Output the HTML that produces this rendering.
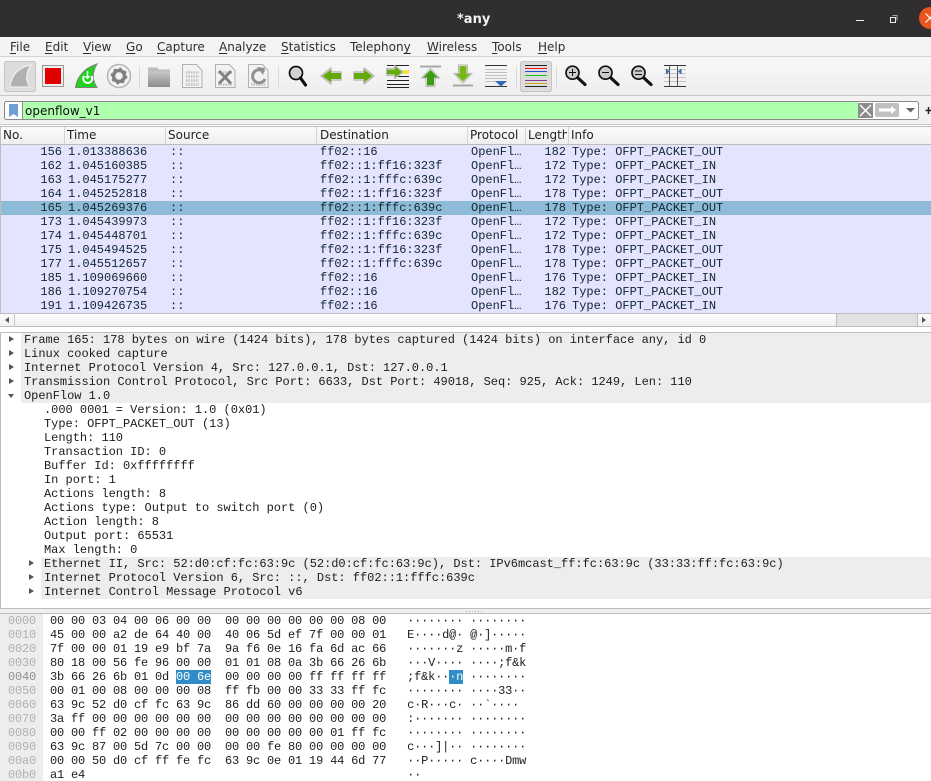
<!DOCTYPE html>
<html><head><meta charset="utf-8"><style>
html,body{margin:0;padding:0;background:#fff}
#r{position:relative;width:931px;height:781px;overflow:hidden;background:#fff;font-family:"DejaVu Sans",sans-serif;font-size:12px;color:#222}
.b{position:absolute}
.m{position:absolute;top:40px;font:12px/14px "DejaVu Sans",sans-serif;color:#2e2e2e;white-space:pre}
.m u{text-underline-offset:2px}
.h{position:absolute;top:127px;font:12px/16px "DejaVu Sans",sans-serif;color:#222;white-space:pre;overflow:hidden}
.s{position:absolute;top:127px;width:1px;height:17px;background:#d4d4d4}
.row{position:absolute;left:1px;width:930px;height:14px;background:#e4e4ff}
.row span{font:12px/14px "Liberation Mono",monospace;color:#12272e;white-space:pre;position:absolute;top:0}
.row .n{left:0;width:61px;text-align:right}
.row .t{left:67px}.row .c{left:169px}.row .d{left:319px}.row .p{left:470px}
.row .l{left:510px;width:55px;text-align:right}.row .i{left:571px}
.det{position:absolute;height:14px;right:0;font:12px/14px "Liberation Mono",monospace;letter-spacing:-0.02px;color:#1c1c1c;white-space:pre;padding-left:3px}
.g{background:#ededed}
.ar{position:absolute;width:0;height:0;border-left:5px solid #555;border-top:3.5px solid transparent;border-bottom:3.5px solid transparent}
.hx{position:absolute;left:8px;height:14px;font:12px/14px "Liberation Mono",monospace;letter-spacing:-0.2px;color:#1c1c1c;white-space:pre}
.hx i{font-style:normal;color:#b0b0b0}
.hx b{font-weight:normal;color:#fff;background:#308cc6}
.hx em{font-style:normal;color:#8f8f8f}
svg{position:absolute;left:0;top:0}
</style></head><body><div id="r">

<div class="b" style="left:0;top:0;width:931px;height:37px;background:#302e2e"></div>
<div class="b" style="left:457px;top:11px;color:#f2f2f2;font:bold 13px/18px 'DejaVu Sans',sans-serif">*any</div>

<div class="b" style="left:0;top:37px;width:931px;height:19px;background:#f3f3f3;border-bottom:1px solid #d4d4d4"></div>
<div class="m" style="left:10px"><u>F</u>ile</div>
<div class="m" style="left:45px"><u>E</u>dit</div>
<div class="m" style="left:83px"><u>V</u>iew</div>
<div class="m" style="left:126px"><u>G</u>o</div>
<div class="m" style="left:157px"><u>C</u>apture</div>
<div class="m" style="left:219px"><u>A</u>nalyze</div>
<div class="m" style="left:281px"><u>S</u>tatistics</div>
<div class="m" style="left:350px">Telephon<u>y</u></div>
<div class="m" style="left:427px"><u>W</u>ireless</div>
<div class="m" style="left:492px"><u>T</u>ools</div>
<div class="m" style="left:538px"><u>H</u>elp</div>

<div class="b" style="left:0;top:57px;width:931px;height:38px;background:linear-gradient(#f8f8f8,#eeeeee);border-bottom:1px solid #c6c6c6"></div>
<div class="b" style="left:0;top:96px;width:931px;height:28px;background:#f2f2f2;border-bottom:1px solid #c9c9c9"></div>

<svg width="931" height="125" viewBox="0 0 931 125">
 <defs>
  <linearGradient id="fg" x1="0" y1="0" x2="0" y2="1"><stop offset="0" stop-color="#c8c8c8"/><stop offset="1" stop-color="#8c8c8c"/></linearGradient>
 </defs>
 <g fill="none">
  <path d="M856 20.500h8" stroke="#eee"/>
  <rect x="890.500" y="17.500" width="5" height="5" stroke="#eee"/>
  <path d="M892.500 15.500h4.500v5" stroke="#aaa"/>
  <circle cx="930" cy="18" r="11" fill="#e9541f"/>
  <path d="M925.500 13.500l9 9M934.500 13.500l-9 9" stroke="#fff" stroke-width="1.200"/>
 </g>
 <rect x="4.500" y="61.500" width="31" height="30" rx="2" fill="#dcdcdc" stroke="#c4c4c4"/>
 <path d="M10 87C11 75 19 67 31 65C26 72 25 80 30 87Z" fill="#b0b0b0" stroke="#f0f0f0" stroke-width="1.200"/>
 <rect x="42.500" y="65.500" width="21" height="21" fill="#eee" stroke="#9a9a9a"/>
 <rect x="45" y="68" width="16" height="16" fill="#e00000"/>
 <path d="M75.500 87.500C77 76 85 68 97 64C92 72 92 80 97 87.500Z" fill="#1cd41c" stroke="#808080"/>
 <path d="M84 76A4.500 4.500 0 1 0 91.500 76" fill="none" stroke="#fff" stroke-width="2"/>
 <path d="M87.500 71v7" stroke="#fff" stroke-width="1.500"/>
 <path d="M84.500 76l3 3.500l3-3.500Z" fill="#fff"/>
 <circle cx="119" cy="76" r="11.500" fill="#f2f2f2" stroke="#b4b4b4" stroke-width="1.500"/>
 <circle cx="119" cy="76" r="5.500" fill="none" stroke="#808080" stroke-width="3.500"/>
 <circle cx="119" cy="76" r="7.500" fill="none" stroke="#808080" stroke-width="1.800" stroke-dasharray="2.500 3.390"/>
 <path d="M139.500 67v20M278.500 67v20M516.500 67v20M556.500 67v20" stroke="#d8d8d8"/>
 <path d="M148 87V67.500h9l2 2h11V87Z" fill="#bdbdbd"/>
 <rect x="148" y="71.500" width="22" height="15.500" fill="url(#fg)"/>
 <g fill="#f2f2f2" stroke="#b0b0b0">
  <path d="M182.500 87.500V64.500h14l5.500 6v17Z"/>
  <path d="M215.500 87.500V64.500h14l5.500 6v17Z"/>
  <path d="M248.500 87.500V64.500h14l5.500 6v17Z"/>
 </g>
 <g stroke="#c0c0c0" stroke-dasharray="1.500 1" stroke-width="2.500" fill="none">
  <path d="M186 72.500h13M186 76.500h13M186 80.500h13M186 84.500h13"/>
  <path d="M218 72.500h14M218 84.500h14"/>
  <path d="M251 84.500h14"/>
 </g>
 <path d="M219 71l12 12.500M231 71l-12 12.500" stroke="#808080" stroke-width="2.800"/>
 <path d="M264 72A6.500 6.500 0 1 0 265 79" fill="none" stroke="#909090" stroke-width="3"/>
 <path d="M257 67l8 1l-2 7Z" fill="#909090"/>
 <circle cx="296" cy="73" r="6.500" fill="#d2d2d2" stroke="#111" stroke-width="1.700"/>
 <path d="M300.500 78l5 7" stroke="#111" stroke-width="3.200" stroke-linecap="round"/>
 <g stroke-linejoin="round">
  <path d="M321 76l10-8v4h10v8h-10v4Z" fill="#fff" stroke="#bcbcbc" stroke-width="1.500"/>
  <path d="M322.500 76l8.500-6.500v3.500h10v6h-10v3.500Z" fill="#64aa0a"/>
  <path d="M374 76l-10-8v4h-10v8h10v4Z" fill="#fff" stroke="#bcbcbc" stroke-width="1.500"/>
  <path d="M372.500 76l-8.500-6.500v3.500h-10v6h10v3.500Z" fill="#64aa0a"/>
 </g>
 <path d="M387 65.500h22M395 76.500h14M387 80.500h22M387 84.500h22M387 87.500h22" stroke="#222"/>
 <rect x="402" y="70" width="7" height="4" fill="#f5e24a"/>
 <path d="M403 72l-8.500-6.500v3h-8v7h8v3Z" fill="#fff" stroke="#bcbcbc" stroke-width="1.200" stroke-linejoin="round"/>
 <path d="M402 72l-7-5.500v3h-8v5h8v3Z" fill="#64aa0a"/>
 <path d="M420 66.500h21" stroke="#a8a8a8" stroke-width="2"/>
 <path d="M430.500 68.500l9 9.500h-4.500v8.500h-9V78h-4.500Z" fill="#fff" stroke="#bcbcbc" stroke-width="1.200" stroke-linejoin="round"/>
 <path d="M430.500 70l7.500 7.500h-4v8h-7v-8h-4Z" fill="#3f9c10"/>
 <path d="M453 85.500h20" stroke="#a8a8a8" stroke-width="2"/>
 <path d="M463 83l9-9.500h-4.500V65h-9v8.500H454Z" fill="#fff" stroke="#bcbcbc" stroke-width="1.200" stroke-linejoin="round"/>
 <path d="M463 81.500l7.500-7.500h-4v-8h-7v8h-4Z" fill="#76b81c"/>
 <path d="M485 65.500h22M485 86.500h22" stroke="#333"/>
 <path d="M485 69.500h22M485 72.500h22M485 75.500h22M485 78.500h22M485 81.500h22" stroke="#c0c0c0"/>
 <path d="M495 81h12l-6 5.500Z" fill="#2f6cb5"/>
 <rect x="520.500" y="61.500" width="31" height="30" rx="2" fill="#dcdcdc" stroke="#c4c4c4"/>
 <path d="M525 65.500h22M525 86.500h22" stroke="#222"/>
 <path d="M525 68.500h22" stroke="#f01818"/><path d="M525 71.500h22" stroke="#2850d8"/>
 <path d="M525 75.500h22" stroke="#20c020"/><path d="M525 80.500h22" stroke="#803c98"/>
 <path d="M525 83.500h22" stroke="#d0a818"/>
 <g fill="#cccccc" stroke="#111" stroke-width="1.700">
  <circle cx="572.500" cy="72.700" r="6.500"/><circle cx="605.500" cy="72.700" r="6.500"/><circle cx="638.500" cy="72.700" r="6.500"/>
 </g>
 <path d="M578 78l7 6.500M611 78l7 6.500M644 78l7 6.500" stroke="#111" stroke-width="3.200" stroke-linecap="round"/>
 <path d="M569 72.500h7M572.500 69v7M602 72.500h7M635 71h7M635 74.500h7" stroke="#111"/>
 <path d="M664 65.500h22M664 86.500h22" stroke="#333"/>
 <path d="M664 69.500h22M664 73.500h22M664 77.500h22M664 81.500h22" stroke="#c4c4c4"/>
 <path d="M669.500 65v22M677.500 65v22" stroke="#555"/>
 <path d="M666 68.500l3.500 3l-3.500 3ZM681.500 68.500l-3.500 3l3.500 3Z" fill="#2f6cb5"/>

 <rect x="4.500" y="101.500" width="914" height="18" rx="2" fill="#fff" stroke="#8a8a8a"/>
 <rect x="23" y="102" width="835" height="17" fill="#afffaf"/>
 <path d="M22.500 102v17" stroke="#8a8a8a"/>
 <path d="M9 104h9v13l-4.500-3l-4.500 3Z" fill="#6d9fd6"/>
 <rect x="858" y="103" width="15" height="15" fill="#8b8b8b"/>
 <path d="M860 105l11 11M871 105l-11 11" stroke="#fff" stroke-width="1.500"/>
 <rect x="875" y="103" width="24" height="14" rx="2" fill="#c0c0c0"/>
 <path d="M879 108.500h12v-2.500l5 4l-5 4v-2.500h-12Z" fill="#fff"/>
 <path d="M906 108h9l-4.500 4.500Z" fill="#666"/>
 <path d="M925.500 110.500h6M928.500 107v7" stroke="#222" stroke-width="1.500"/>
</svg>
<div class="b" style="left:25px;top:103px;font:12px/17px 'DejaVu Sans',sans-serif;color:#111">openflow_v1</div>

<div class="b" style="left:0;top:126px;width:931px;height:1px;background:#bdbdbd"></div>
<div class="b" style="left:0;top:127px;width:931px;height:17px;background:linear-gradient(#fbfbfb,#efefef);border-bottom:1px solid #bcbcbc"></div>
<div class="s" style="left:64px"></div><div class="s" style="left:165px"></div><div class="s" style="left:316px"></div><div class="s" style="left:467px"></div><div class="s" style="left:525px"></div><div class="s" style="left:568px"></div>
<div class="h" style="left:3px">No.</div><div class="h" style="left:67px">Time</div><div class="h" style="left:168px">Source</div><div class="h" style="left:320px">Destination</div><div class="h" style="left:470px">Protocol</div><div class="h" style="left:528px;width:39px">Length</div><div class="h" style="left:571px">Info</div>

<div class="b" style="left:0;top:127px;width:1px;height:200px;background:#bdbdbd"></div>
<div class="row" style="top:145px"><span class="n">156</span><span class="t">1.013388636</span><span class="c">::</span><span class="d">ff02::16</span><span class="p">OpenFl…</span><span class="l">182</span><span class="i">Type: OFPT_PACKET_OUT</span></div>
<div class="row" style="top:159px"><span class="n">162</span><span class="t">1.045160385</span><span class="c">::</span><span class="d">ff02::1:ff16:323f</span><span class="p">OpenFl…</span><span class="l">172</span><span class="i">Type: OFPT_PACKET_IN</span></div>
<div class="row" style="top:173px"><span class="n">163</span><span class="t">1.045175277</span><span class="c">::</span><span class="d">ff02::1:fffc:639c</span><span class="p">OpenFl…</span><span class="l">172</span><span class="i">Type: OFPT_PACKET_IN</span></div>
<div class="row" style="top:187px"><span class="n">164</span><span class="t">1.045252818</span><span class="c">::</span><span class="d">ff02::1:ff16:323f</span><span class="p">OpenFl…</span><span class="l">178</span><span class="i">Type: OFPT_PACKET_OUT</span></div>
<div class="row" style="top:201px;background:#8dbbd8"><span class="n">165</span><span class="t">1.045269376</span><span class="c">::</span><span class="d">ff02::1:fffc:639c</span><span class="p">OpenFl…</span><span class="l">178</span><span class="i">Type: OFPT_PACKET_OUT</span></div>
<div class="row" style="top:215px"><span class="n">173</span><span class="t">1.045439973</span><span class="c">::</span><span class="d">ff02::1:ff16:323f</span><span class="p">OpenFl…</span><span class="l">172</span><span class="i">Type: OFPT_PACKET_IN</span></div>
<div class="row" style="top:229px"><span class="n">174</span><span class="t">1.045448701</span><span class="c">::</span><span class="d">ff02::1:fffc:639c</span><span class="p">OpenFl…</span><span class="l">172</span><span class="i">Type: OFPT_PACKET_IN</span></div>
<div class="row" style="top:243px"><span class="n">175</span><span class="t">1.045494525</span><span class="c">::</span><span class="d">ff02::1:ff16:323f</span><span class="p">OpenFl…</span><span class="l">178</span><span class="i">Type: OFPT_PACKET_OUT</span></div>
<div class="row" style="top:257px"><span class="n">177</span><span class="t">1.045512657</span><span class="c">::</span><span class="d">ff02::1:fffc:639c</span><span class="p">OpenFl…</span><span class="l">178</span><span class="i">Type: OFPT_PACKET_OUT</span></div>
<div class="row" style="top:271px"><span class="n">185</span><span class="t">1.109069660</span><span class="c">::</span><span class="d">ff02::16</span><span class="p">OpenFl…</span><span class="l">176</span><span class="i">Type: OFPT_PACKET_IN</span></div>
<div class="row" style="top:285px"><span class="n">186</span><span class="t">1.109270754</span><span class="c">::</span><span class="d">ff02::16</span><span class="p">OpenFl…</span><span class="l">182</span><span class="i">Type: OFPT_PACKET_OUT</span></div>
<div class="row" style="top:299px"><span class="n">191</span><span class="t">1.109426735</span><span class="c">::</span><span class="d">ff02::16</span><span class="p">OpenFl…</span><span class="l">176</span><span class="i">Type: OFPT_PACKET_IN</span></div>

<div class="b" style="left:0;top:313px;width:931px;height:14px;background:linear-gradient(#fdfdfd,#f1f1f1);border-top:1px solid #bdbdbd;border-bottom:1px solid #bdbdbd;box-sizing:border-box"></div>
<div class="b" style="left:14px;top:313px;width:1px;height:14px;background:#c4c4c4"></div>
<div class="b" style="left:836px;top:314px;width:80px;height:12px;background:#e2e2e2;border-left:1px solid #bdbdbd;border-right:1px solid #bdbdbd"></div>
<div class="b" style="left:5px;top:317px;width:0;height:0;border-right:4px solid #555;border-top:3.500px solid transparent;border-bottom:3.500px solid transparent"></div>
<div class="b" style="left:922px;top:317px;width:0;height:0;border-left:4px solid #555;border-top:3.500px solid transparent;border-bottom:3.500px solid transparent"></div>

<div class="b" style="left:0;top:332px;width:931px;height:1px;background:#bdbdbd"></div>
<div class="b" style="left:0;top:608px;width:931px;height:1px;background:#bdbdbd"></div>
<div class="b" style="left:0;top:332px;width:1px;height:277px;background:#bdbdbd"></div>

<div class="det g" style="left:21px;top:333px">Frame 165: 178 bytes on wire (1424 bits), 178 bytes captured (1424 bits) on interface any, id 0</div>
<div class="det g" style="left:21px;top:347px">Linux cooked capture</div>
<div class="det g" style="left:21px;top:361px">Internet Protocol Version 4, Src: 127.0.0.1, Dst: 127.0.0.1</div>
<div class="det g" style="left:21px;top:375px">Transmission Control Protocol, Src Port: 6633, Dst Port: 49018, Seq: 925, Ack: 1249, Len: 110</div>
<div class="det g" style="left:21px;top:389px">OpenFlow 1.0</div>
<div class="det" style="left:41px;top:403px">.000 0001 = Version: 1.0 (0x01)</div>
<div class="det" style="left:41px;top:417px">Type: OFPT_PACKET_OUT (13)</div>
<div class="det" style="left:41px;top:431px">Length: 110</div>
<div class="det" style="left:41px;top:445px">Transaction ID: 0</div>
<div class="det" style="left:41px;top:459px">Buffer Id: 0xffffffff</div>
<div class="det" style="left:41px;top:473px">In port: 1</div>
<div class="det" style="left:41px;top:487px">Actions length: 8</div>
<div class="det" style="left:41px;top:501px">Actions type: Output to switch port (0)</div>
<div class="det" style="left:41px;top:515px">Action length: 8</div>
<div class="det" style="left:41px;top:529px">Output port: 65531</div>
<div class="det" style="left:41px;top:543px">Max length: 0</div>
<div class="det g" style="left:41px;top:557px">Ethernet II, Src: 52:d0:cf:fc:63:9c (52:d0:cf:fc:63:9c), Dst: IPv6mcast_ff:fc:63:9c (33:33:ff:fc:63:9c)</div>
<div class="det g" style="left:41px;top:571px">Internet Protocol Version 6, Src: ::, Dst: ff02::1:fffc:639c</div>
<div class="det g" style="left:41px;top:585px">Internet Control Message Protocol v6</div>

<div class="ar" style="left:9px;top:336px"></div>
<div class="ar" style="left:9px;top:350px"></div>
<div class="ar" style="left:9px;top:364px"></div>
<div class="ar" style="left:9px;top:378px"></div>
<div class="b" style="left:8px;top:394px;width:0;height:0;border-top:4px solid #555;border-left:3.500px solid transparent;border-right:3.500px solid transparent"></div>
<div class="ar" style="left:29px;top:560px"></div>
<div class="ar" style="left:29px;top:574px"></div>
<div class="ar" style="left:29px;top:588px"></div>

<div class="b" style="left:0;top:609px;width:931px;height:5px;background:#efefef;border-bottom:1px solid #bdbdbd;box-sizing:border-box"></div>
<div class="b" style="left:466px;top:611px;width:16px;height:1px;background:repeating-linear-gradient(90deg,#aaa 0 1px,transparent 1px 3px)"></div>

<div class="b" style="left:0;top:614px;width:43px;height:167px;background:#ededed"></div>
<div class="hx" style="top:614px"><i>0000</i>  00 00 03 04 00 06 00 00  00 00 00 00 00 00 08 00   ········ ········</div>
<div class="hx" style="top:628px"><i>0010</i>  45 00 00 a2 de 64 40 00  40 06 5d ef 7f 00 00 01   E····d@· @·]·····</div>
<div class="hx" style="top:642px"><i>0020</i>  7f 00 00 01 19 e9 bf 7a  9a f6 0e 16 fa 6d ac 66   ·······z ·····m·f</div>
<div class="hx" style="top:656px"><i>0030</i>  80 18 00 56 fe 96 00 00  01 01 08 0a 3b 66 26 6b   ···V···· ····;f&amp;k</div>
<div class="hx" style="top:670px"><em>0040</em>  3b 66 26 6b 01 0d <b>00 6e</b>  00 00 00 00 ff ff ff ff   ;f&amp;k··<b>·n</b> ········</div>
<div class="hx" style="top:684px"><i>0050</i>  00 01 00 08 00 00 00 08  ff fb 00 00 33 33 ff fc   ········ ····33··</div>
<div class="hx" style="top:698px"><i>0060</i>  63 9c 52 d0 cf fc 63 9c  86 dd 60 00 00 00 00 20   c·R···c· ··`···· </div>
<div class="hx" style="top:712px"><i>0070</i>  3a ff 00 00 00 00 00 00  00 00 00 00 00 00 00 00   :······· ········</div>
<div class="hx" style="top:726px"><i>0080</i>  00 00 ff 02 00 00 00 00  00 00 00 00 00 01 ff fc   ········ ········</div>
<div class="hx" style="top:740px"><i>0090</i>  63 9c 87 00 5d 7c 00 00  00 00 fe 80 00 00 00 00   c···]|·· ········</div>
<div class="hx" style="top:754px"><i>00a0</i>  00 00 50 d0 cf ff fe fc  63 9c 0e 01 19 44 6d 77   ··P····· c····Dmw</div>
<div class="hx" style="top:768px"><i>00b0</i>  a1 e4                                              ··</div>

</div></body></html>
